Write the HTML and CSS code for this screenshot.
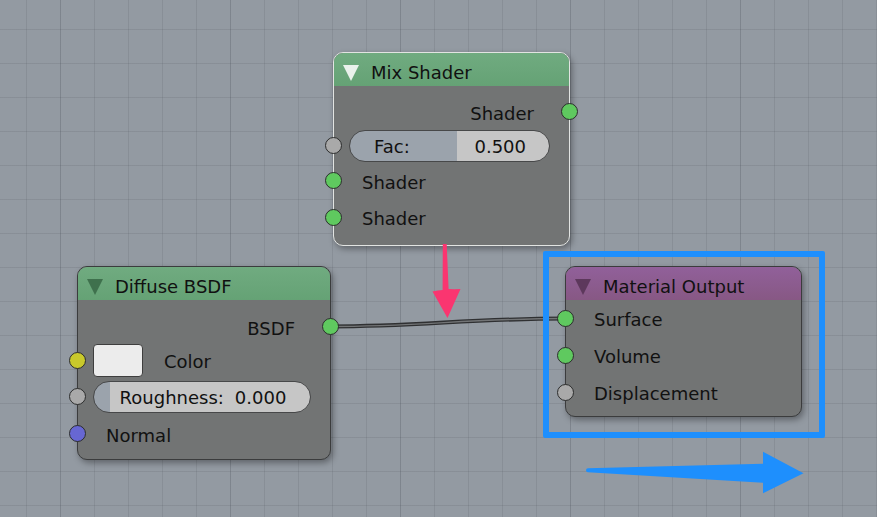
FILE: index.html
```html
<!DOCTYPE html>
<html lang="en">
<head>
<meta charset="utf-8">
<title>Node Editor</title>
<link rel="stylesheet" href="styles.css">
</head>
<body>
<div class="canvas">
  <svg class="links" width="877" height="517" viewBox="0 0 877 517">
    <path class="link-outer" d="M330 326.5 C 420 326.5, 470 318.5, 566 318.5"/>
    <path class="link-inner" d="M330 326.5 C 420 326.5, 470 318.5, 566 318.5"/>
  </svg>

  <div class="node node-mix is-active">
    <div class="node-header header-green">
      <span class="collapse collapse-light"></span>
      <span class="title">Mix Shader</span>
    </div>
    <div class="node-body body-mix">
      <div class="row row-out row-h34">
        <span class="label">Shader</span>
        <span class="socket sock-shader sock-out"></span>
      </div>
      <div class="row row-slider row-h34">
        <span class="socket sock-value sock-in"></span>
        <div class="slider slider-fac"><span>Fac:</span><span>0.500</span></div>
      </div>
      <div class="row row-in row-h36">
        <span class="socket sock-shader sock-in"></span>
        <span class="label">Shader</span>
      </div>
      <div class="row row-in row-h37">
        <span class="socket sock-shader sock-in"></span>
        <span class="label">Shader</span>
      </div>
    </div>
  </div>

  <div class="node node-diffuse">
    <div class="node-header header-green">
      <span class="collapse collapse-green"></span>
      <span class="title">Diffuse BSDF</span>
    </div>
    <div class="node-body body-diffuse">
      <div class="row row-out row-h34">
        <span class="label">BSDF</span>
        <span class="socket sock-shader sock-out"></span>
      </div>
      <div class="row row-color">
        <span class="socket sock-color sock-in"></span>
        <span class="swatch"></span>
        <span class="label color-label">Color</span>
      </div>
      <div class="row row-slider row-rough">
        <span class="socket sock-value sock-in"></span>
        <div class="slider slider-rough"><span>Roughness:</span><span>0.000</span></div>
      </div>
      <div class="row row-in row-normal">
        <span class="socket sock-vector sock-in"></span>
        <span class="label">Normal</span>
      </div>
    </div>
  </div>

  <div class="node node-material">
    <div class="node-header header-purple">
      <span class="collapse collapse-purple"></span>
      <span class="title">Material Output</span>
    </div>
    <div class="node-body body-material">
      <div class="row row-in row-h37">
        <span class="socket sock-shader sock-in"></span>
        <span class="label">Surface</span>
      </div>
      <div class="row row-in row-h37">
        <span class="socket sock-shader sock-in"></span>
        <span class="label">Volume</span>
      </div>
      <div class="row row-in row-h37">
        <span class="socket sock-value sock-in"></span>
        <span class="label">Displacement</span>
      </div>
    </div>
  </div>

  <div class="highlight"></div>

  <svg class="annotations" width="877" height="517" viewBox="0 0 877 517">
    <path class="arrow-pink" d="M442.8 244 L446.7 244 L448.6 289 Q454 289.3 460.5 289 L447.5 318 L432.5 291.5 Q438 290.3 442.6 290 Z"/>
    <path class="arrow-blue" d="M588 468.3 L763 463.8 L763 451.7 L803.5 473.3 L763 493.3 L763 482.7 L588 472.3 A2 2 0 0 1 588 468.3 Z"/>
  </svg>
</div>
</body>
</html>
```

FILE: styles.css
```css
html, body {
  margin: 0;
  padding: 0;
}

body {
  width: 877px;
  height: 517px;
  overflow: hidden;
  font-family: "DejaVu Sans", "Liberation Sans", sans-serif;
  font-size: 18px;
  color: #111;
}

.canvas {
  position: relative;
  width: 877px;
  height: 517px;
  overflow: hidden;
  background-color: #939aa2;
  background-image:
    linear-gradient(to right, rgba(40, 45, 55, 0.10) 1px, transparent 1px),
    linear-gradient(to right, rgba(40, 45, 55, 0.10) 1px, transparent 1px),
    linear-gradient(to bottom, rgba(40, 45, 55, 0.10) 1px, transparent 1px);
  background-size: 170px 100%, 34px 100%, 100% 34px;
  background-position: 60px 0, 26px 0, 0 29px;
}

.links,
.annotations {
  position: absolute;
  left: 0;
  top: 0;
}

.link-outer {
  fill: none;
  stroke: #2f3032;
  stroke-width: 4;
}

.link-inner {
  fill: none;
  stroke: #727476;
  stroke-width: 1.4;
}

.arrow-pink {
  fill: #fa3570;
}

.arrow-blue {
  fill: #1e8ffd;
}

/* ---------- nodes ---------- */

.node {
  position: absolute;
  box-sizing: border-box;
  border: 1px solid #3b3c3d;
  border-radius: 10px;
  background: #727474;
  box-shadow: 2px 3px 6px rgba(0, 0, 0, 0.35);
}

.node.is-active {
  border-color: #e2e4e2;
}

.node-mix {
  left: 333px;
  top: 52px;
  width: 237px;
  height: 194px;
}

.node-diffuse {
  left: 77px;
  top: 266px;
  width: 254px;
  height: 194px;
}

.node-material {
  left: 565px;
  top: 266px;
  width: 237px;
  height: 151px;
}

.node-header {
  box-sizing: border-box;
  height: 33px;
  padding: 6px 0 0 9px;
  display: flex;
  align-items: center;
  border-radius: 9px 9px 0 0;
}

.header-green {
  background: linear-gradient(to bottom, #70ab80, #65a275);
}

.header-purple {
  background: linear-gradient(to bottom, #91609a, #875884);
}

.collapse {
  width: 0;
  height: 0;
  margin-top: 1px;
  border-left: 8px solid transparent;
  border-right: 8px solid transparent;
  border-top: 16px solid #e9f0ea;
}

.collapse-green {
  border-top-color: #3f714d;
}

.collapse-purple {
  border-top-color: #5d385c;
}

.collapse-light {
  border-top-color: #e9f1eb;
}

.title {
  margin-left: 12px;
  line-height: 27px;
  white-space: nowrap;
}

.node-body {
  display: flex;
  flex-direction: column;
}

.body-mix {
  padding-top: 9px;
}

.body-diffuse {
  padding-top: 10px;
}

.body-material {
  padding-top: 0;
}

.row {
  position: relative;
  display: flex;
  align-items: center;
  box-sizing: border-box;
  white-space: nowrap;
}

.row-h34 { height: 34px; }
.row-h36 { height: 36px; }
.row-h37 { height: 37px; }

.row-out {
  justify-content: flex-end;
  padding-right: 35px;
}

.row-in {
  padding-left: 28px;
}

.row-slider {
  padding-left: 15px;
  padding-right: 19px;
}

.row-color {
  height: 33px;
  padding-left: 15px;
}

.row-rough {
  height: 32px;
  margin-top: 4px;
}

.row-normal {
  height: 36px;
  margin-top: 3px;
}

.label {
  line-height: 22px;
  padding-top: 3px;
}

.color-label {
  margin-left: 21px;
}

.swatch {
  box-sizing: border-box;
  width: 50px;
  height: 33px;
  border: 1px solid #3e3e3e;
  border-radius: 4px;
  background: #ececec;
}

/* ---------- sliders ---------- */

.slider {
  flex: 1;
  box-sizing: border-box;
  height: 32px;
  padding-top: 2px;
  border: 1px solid #474849;
  border-radius: 16px;
  display: flex;
  align-items: center;
  line-height: 22px;
}

.slider-fac {
  justify-content: space-between;
  padding-left: 24px;
  padding-right: 23px;
  background: linear-gradient(to right, #9ba3ac 0, #9ba3ac 107px, #c6c6c6 107px);
}

.slider-rough {
  justify-content: center;
  gap: 11px;
  padding-left: 2px;
  background: linear-gradient(to right, #9ba3ac 0, #9ba3ac 16px, #c6c6c6 16px);
}

/* ---------- sockets ---------- */

.socket {
  position: absolute;
  top: 50%;
  box-sizing: border-box;
  width: 17px;
  height: 17px;
  margin-top: -9px;
  border: 1px solid #2c2d2d;
  border-radius: 50%;
}

.sock-in {
  left: -9px;
}

.sock-out {
  right: -9px;
}

.sock-shader {
  background: #5fc95f;
}

.sock-value {
  background: #a9a9a9;
}

.sock-color {
  background: #c9c92b;
}

.sock-vector {
  background: #6767d3;
}

/* ---------- annotation frame ---------- */

.highlight {
  position: absolute;
  left: 543px;
  top: 251px;
  width: 282px;
  height: 187px;
  box-sizing: border-box;
  border: 6px solid #1e8ffd;
  border-radius: 2px;
}
```
